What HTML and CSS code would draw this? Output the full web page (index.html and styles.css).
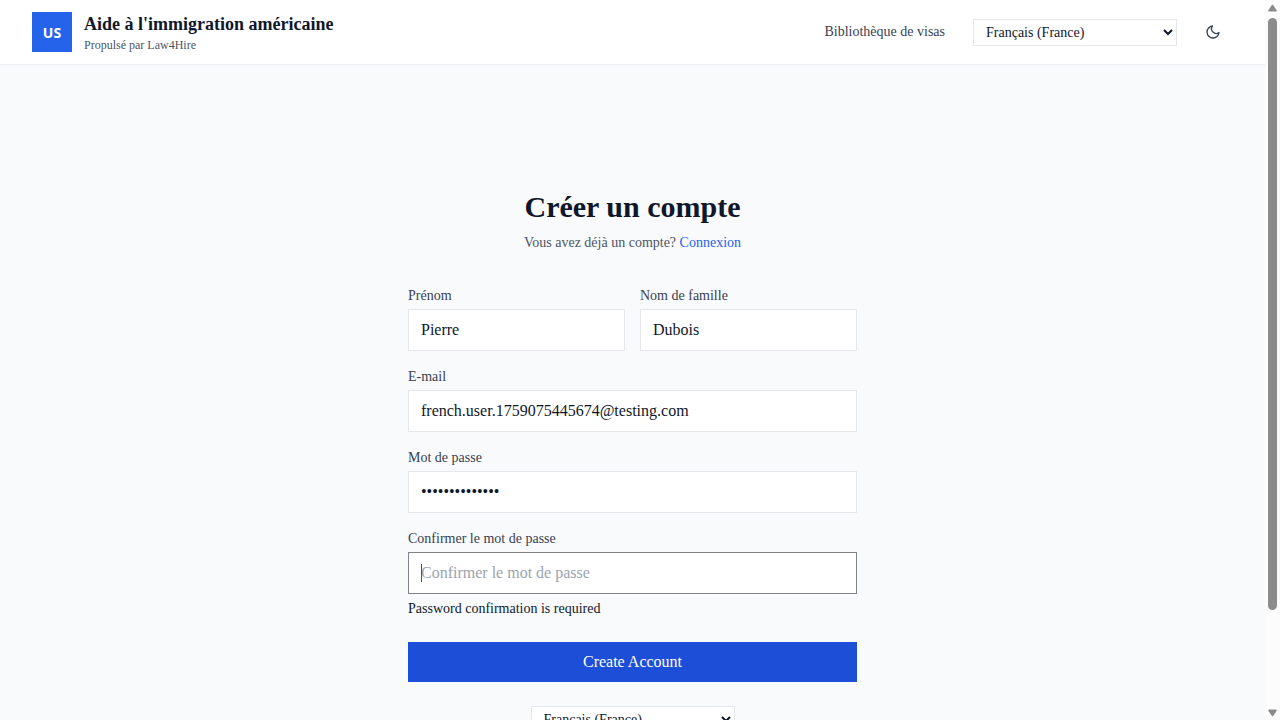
FILE: index.html
```html
<!DOCTYPE html>
<html lang="fr">
<head>
<meta charset="utf-8">
<meta name="viewport" content="width=device-width, initial-scale=1">
<title>Créer un compte</title>
<link rel="stylesheet" href="styles.css">
</head>
<body>
<div class="window">
  <div class="page">
    <header class="header">
      <div class="brand">
        <svg class="logo" viewBox="0 0 40 40" role="img" aria-label="US">
          <rect width="40" height="40" fill="#2563eb"/>
          <text class="logo-text" x="20" y="26" text-anchor="middle">US</text>
        </svg>
        <div class="brand-text">
          <span class="brand-name">Aide à l'immigration américaine</span>
          <span class="brand-by">Propulsé par Law4Hire</span>
        </div>
      </div>
      <nav class="nav">
        <a class="nav-link" href="#visas">Bibliothèque de visas</a>
        <select class="lang" aria-label="Langue"><option>Français (France)</option></select>
        <button class="theme" type="button" aria-label="Mode sombre">
          <svg class="moon" viewBox="0 0 24 24" fill="none" stroke="currentColor" stroke-width="2" stroke-linecap="round" stroke-linejoin="round"><path d="M21 12.79A9 9 0 1 1 11.21 3 7 7 0 0 0 21 12.79z"/></svg>
        </button>
      </nav>
    </header>
    <main class="main">
      <div class="panel">
        <h1 class="title">Créer un compte</h1>
        <p class="subtitle">Vous avez déjà un compte? <a class="link" href="#connexion">Connexion</a></p>
        <form class="form">
          <div class="row">
            <div class="field">
              <label class="label" for="first">Prénom</label>
              <input class="input" id="first" type="text" value="Pierre">
            </div>
            <div class="field">
              <label class="label" for="last">Nom de famille</label>
              <input class="input" id="last" type="text" value="Dubois">
            </div>
          </div>
          <div class="field">
            <label class="label" for="email">E-mail</label>
            <input class="input" id="email" type="email" value="french.user.1759075445674@testing.com">
          </div>
          <div class="field">
            <label class="label" for="password">Mot de passe</label>
            <input class="input" id="password" type="password" value="SecurePass123!">
          </div>
          <div class="field">
            <label class="label" for="confirm">Confirmer le mot de passe</label>
            <div class="active">
              <input class="input input-active" id="confirm" type="password" placeholder="Confirmer le mot de passe" aria-describedby="confirm-error">
              <span class="caret"></span>
            </div>
            <p class="error" id="confirm-error">Password confirmation is required</p>
          </div>
          <button class="submit" type="submit">Create Account</button>
        </form>
        <select class="lang" aria-label="Langue du formulaire"><option>Français (France)</option></select>
      </div>
    </main>
  </div>
  <div class="scrollbar" aria-hidden="true">
    <svg class="arrow" viewBox="0 0 10 8"><path d="M4.3 .8Q5 0 5.7 .8L9.6 6.6Q10 8 9 8H1Q0 8 .4 6.6Z" fill="#8b8b8b"/></svg>
    <div class="track"><div class="thumb"></div></div>
    <svg class="arrow" viewBox="0 0 10 8"><path d="M4.3 7.2Q5 8 5.7 7.2L9.6 1.4Q10 0 9 0H1Q0 0 .4 1.4Z" fill="#8b8b8b"/></svg>
  </div>
</div>
</body>
</html>
```
FILE: styles.css
```css
* { box-sizing: border-box; }
body {
  margin: 0;
  background: #f9fafc;
  color: #0f172a;
  font-family: "Liberation Serif", "Times New Roman", serif;
  font-size: 14px;
  line-height: 20px;
}
input, select, button { font-family: inherit; }
a { text-decoration: none; }
.window {
  display: grid;
  grid-template-columns: minmax(0, 1fr) 15px;
  height: 100vh;
  overflow: hidden;
}
.page {
  min-width: 0;
  overflow: hidden;
}
.header {
  display: flex;
  align-items: center;
  justify-content: space-between;
  padding: 11px 32px;
  background: #fff;
  border-bottom: 1px solid #eceef1;
}
.brand { display: flex; align-items: center; gap: 12px; }
.logo { width: 40px; height: 40px; }
.logo-text { font: bold 14px "Noto Sans", sans-serif; fill: #fff; }
.brand-text { display: flex; flex-direction: column; }
.brand-name { font-size: 18px; font-weight: bold; line-height: 26px; }
.brand-by { font-size: 12px; line-height: 16px; color: #4b5563; }
.nav { display: flex; align-items: center; }
.nav-link { margin-right: 28px; line-height: 20px; color: #374151; }
.lang {
  width: 204px;
  height: 27px;
  padding: 0 0 0 8px;
  border: 1px solid #e5e7eb;
  border-radius: 0;
  background: #fff;
  color: #0f172a;
  font-size: 14px;
}
.theme {
  display: flex;
  margin: 0 4px 0 20px;
  padding: 8px;
  border: 0;
  background: none;
  color: #374151;
}
.moon { width: 16px; height: 16px; }
.main {
  display: flex;
  justify-content: center;
  padding: 124px 16px 48px;
}
.panel {
  display: flex;
  flex-direction: column;
  align-items: center;
  width: 100%;
  max-width: 449px;
}
.title { margin: 0; font-size: 30px; line-height: 36px; }
.subtitle { margin: 8px 0 32px; color: #4b5563; }
.link { color: #2563eb; }
.form {
  display: flex;
  flex-direction: column;
  gap: 15px;
  width: 100%;
}
.row { display: grid; grid-template-columns: 1fr 1fr; gap: 15px; }
.field { display: flex; flex-direction: column; gap: 3px; min-width: 0; }
.label { line-height: 21px; color: #374151; }
.input {
  width: 100%;
  height: 42px;
  padding: 0 12px;
  border: 1px solid #e5e7eb;
  border-radius: 0;
  outline: 0;
  background: #fff;
  color: #0f172a;
  font-size: 16px;
}
.input::placeholder { color: #9ca3af; }
.active { position: relative; }
.input-active { display: block; border-color: #80838a; }
.caret {
  position: absolute;
  top: 12px;
  left: 13px;
  width: 1px;
  height: 18px;
  background: #4b5563;
}
.error { margin: 0; line-height: 24px; }
.submit {
  height: 40px;
  margin: 6px 0 24px;
  border: 0;
  background: #1d4ed8;
  color: #fff;
  font-size: 16px;
}
.scrollbar {
  display: flex;
  flex-direction: column;
  align-items: center;
  gap: 6px;
  padding: 4px 0 3px;
  background: #fcfcfc;
}
.arrow { width: 9px; height: 8px; }
.track { flex: 1; width: 9px; }
.thumb { height: 86.4%; border-radius: 5px; background: #8b8b8b; }
```
